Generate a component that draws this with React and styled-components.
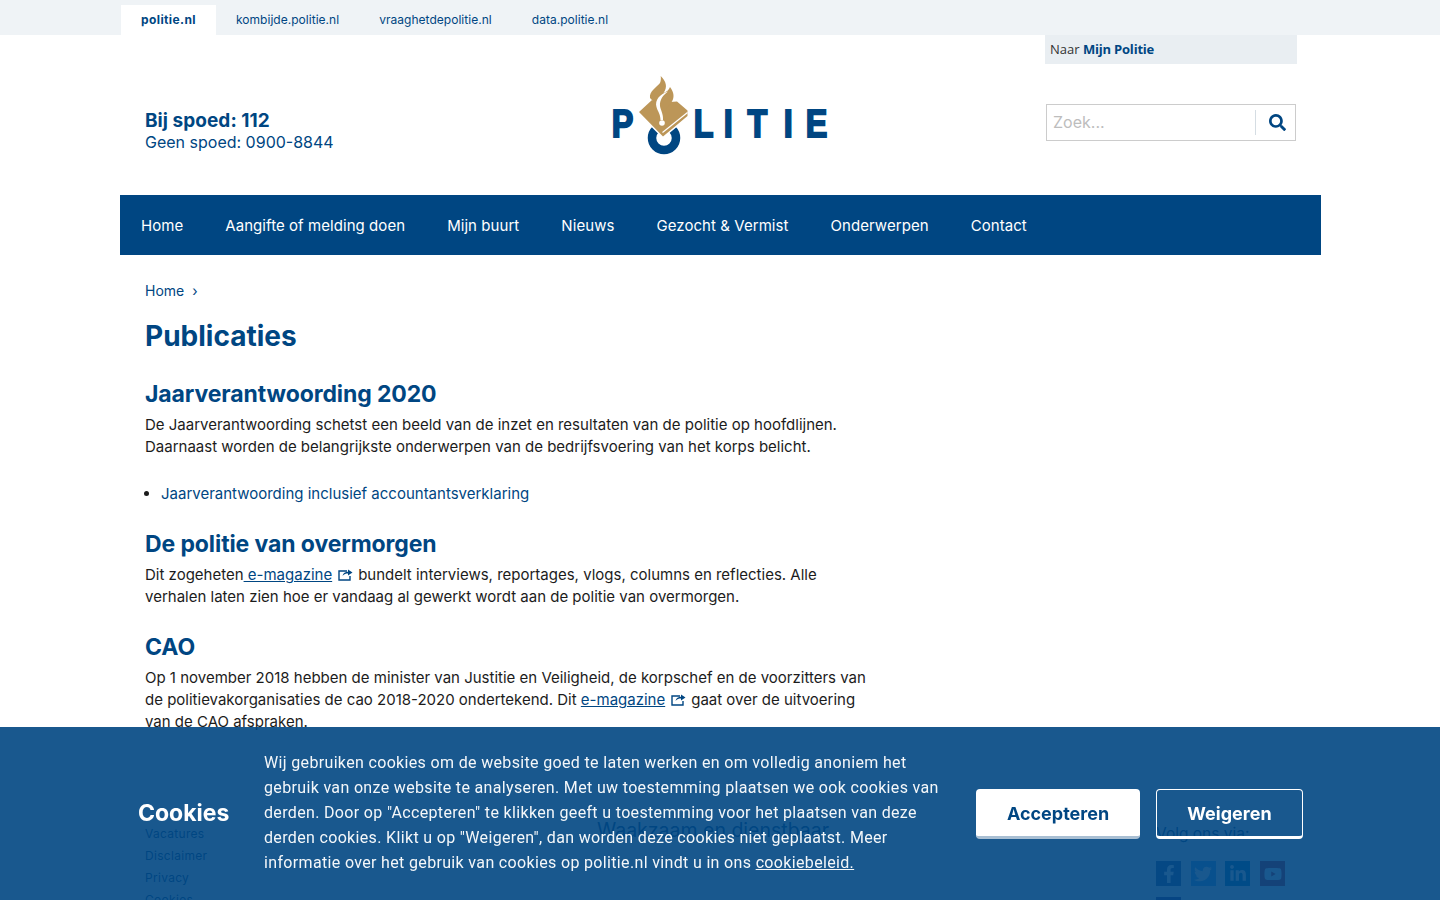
import React from 'react';
import styled, { createGlobalStyle } from 'styled-components';
import { FaSearch, FaFacebookF, FaTwitter, FaLinkedinIn, FaYoutube, FaRss } from 'react-icons/fa';

const blue = '#004682';
const gold = '#bc9658';

const GlobalStyle = createGlobalStyle`
  html, body {
    margin: 0;
    height: 100%;
    overflow: hidden;
    background: #fff;
  }
  body {
    font-family: Inter, "Noto Sans", sans-serif;
    color: #1c1c1c;
  }
  * { box-sizing: border-box; }
`;

const TopBar = styled.div`
  height: 35px;
  background: #eff3f6;
  padding: 5px 0 0 121px;
  display: flex;
`;

const Tab = styled.a`
  height: 30px;
  line-height: 29px;
  padding: 0 20px;
  font-size: 12px;
  letter-spacing: ${p => (p.$active ? '0.4px' : '0.03px')};
  color: ${blue};
  font-weight: ${p => (p.$active ? 700 : 400)};
  background: ${p => (p.$active ? '#fff' : 'transparent')};
`;

const Wrap = styled.div`
  width: 1201px;
  margin-left: 120px;
`;

const Header = styled.header`
  height: 160px;
  padding: 0 24px 0 25px;
  display: grid;
  grid-template-columns: 455px 240px 1fr;
`;

const Contact = styled.div`
  padding-top: 74px;
  color: ${blue};
`;

const Urgent = styled.div`
  font-size: 19px;
  font-weight: 700;
  line-height: 23px;
  letter-spacing: 0.05px;
`;

const NonUrgent = styled.div`
  font-size: 16px;
  line-height: 21px;
`;

const LogoBox = styled.a`
  padding-top: 25px;
  display: block;
`;

const HeaderRight = styled.div`
  display: flex;
  flex-direction: column;
  align-items: flex-end;
`;

const MyPolice = styled.div`
  width: 252px;
  height: 29px;
  line-height: 28px;
  padding-left: 5px;
  background: #e9eef2;
  font-family: "Open Sans", sans-serif;
  font-size: 13px;
  color: #333;

  b {
    color: ${blue};
    letter-spacing: -0.2px;
  }
`;

const SearchBox = styled.form`
  width: 250px;
  height: 37px;
  margin: 40px 1px 0 0;
  border: 1px solid #ccc;
  display: flex;
  align-items: center;
`;

const SearchInput = styled.input`
  flex: 1;
  min-width: 0;
  height: 100%;
  border: 0;
  outline: 0;
  padding: 0 6px 2px;
  font-family: Inter, sans-serif;
  font-size: 16px;
  background: transparent;

  &::placeholder {
    color: #bdbdbd;
  }
`;

const SearchButton = styled.span`
  width: 40px;
  height: 25px;
  padding-left: 3px;
  border-left: 1px solid #d5dde3;
  display: flex;
  align-items: center;
  justify-content: center;
  color: ${blue};
  font-size: 17px;
`;

const Nav = styled.nav`
  height: 60px;
  background: ${blue};
  display: flex;
  align-items: center;
`;

const NavItem = styled.a`
  padding: 0 21px;
  color: #fff;
  font-size: 15px;
  letter-spacing: 0.06px;
`;

const Main = styled.main`
  padding: 25px 0 0 25px;
  width: 750px;
`;

const Crumb = styled.div`
  font-size: 14px;
  line-height: 22px;
  color: ${blue};

  span {
    margin-left: 8px;
  }
`;

const Title = styled.h1`
  margin: 14px 0 23px;
  font-size: 28px;
  line-height: 40px;
  font-weight: 700;
  color: ${blue};
`;

const Section = styled.section`
  margin-bottom: 24px;
`;

const Heading = styled.h2`
  margin: 0 0 5px;
  font-size: 23px;
  line-height: 30px;
  font-weight: 700;
  letter-spacing: -0.1px;
  color: ${blue};
`;

const Para = styled.p`
  margin: 0;
  font-size: 15px;
  line-height: 22px;
`;

const LinkList = styled.ul`
  margin: 25px 0 0;
  padding: 0 0 0 16px;
  font-size: 15px;
  line-height: 22px;
`;

const PlainLink = styled.a`
  color: ${blue};
`;

const InlineLink = styled.a`
  color: ${blue};
  text-decoration: underline;
`;

const ExtIcon = styled.svg`
  width: 15px;
  height: 13px;
  margin: 0 5px 0 6px;
  vertical-align: -1px;
`;

const Footer = styled.footer`
  margin-top: 89px;
  padding-left: 25px;
  display: grid;
  grid-template-columns: 452px 559px 1fr;
  color: ${blue};
`;

const FooterLinks = styled.div`
  padding-top: 1px;
  font-size: 12px;
  line-height: 22px;
  letter-spacing: 0.3px;
`;

const Motto = styled.div`
  font-size: 19.5px;
  line-height: 16px;
`;

const FollowLabel = styled.div`
  padding-top: 1px;
  font-size: 15.5px;
  line-height: 22px;
`;

const Socials = styled.div`
  margin-top: 16px;
  display: grid;
  grid-template-columns: repeat(4, 25px);
  column-gap: 9.7px;
  row-gap: 11px;
`;

const SocialTile = styled.span`
  width: 25px;
  height: 25px;
  background: ${p => p.$bg};
  color: #fff;
  display: flex;
  align-items: center;
  justify-content: center;
  font-size: 18px;
`;

const CookieBar = styled.div`
  position: fixed;
  left: 0;
  right: 0;
  bottom: 0;
  height: 173px;
  padding-left: 138px;
  background: rgba(0, 70, 130, 0.9);
  color: #fff;
  display: flex;
  align-items: center;
`;

const CookieTitle = styled.div`
  width: 126px;
  padding-bottom: 2px;
  font-size: 23px;
  font-weight: 700;
`;

const CookieText = styled.p`
  width: 690px;
  margin: 0 22px 0 0;
  padding-bottom: 2px;
  font-family: Roboto, sans-serif;
  font-size: 16px;
  line-height: 25px;
  letter-spacing: 0.34px;
  opacity: 0.95;

  a {
    color: #fff;
    text-decoration: underline;
  }
`;

const CookieButton = styled.button`
  height: 50px;
  margin-left: ${p => p.$gap}px;
  width: ${p => p.$width}px;
  padding: 2px 0 0;
  border-radius: 4px;
  font-family: Inter, sans-serif;
  font-size: 18px;
  font-weight: 700;
  cursor: pointer;
  background: ${p => (p.$outline ? 'transparent' : '#fff')};
  color: ${p => (p.$outline ? '#fff' : blue)};
  border: ${p => (p.$outline ? '1px solid #fff' : '0')};
  border-bottom: 3px solid ${p => (p.$outline ? '#fff' : '#a9bfd3')};
`;

const logoLetters = [['P', 11.7], ['L', 93.7], ['I', 123.8], ['T', 147.4], ['I', 183.8], ['E', 205.7]];

const Logo = () => (
  <svg width="240" height="110" viewBox="0 0 240 110">
    <g fontFamily="'Liberation Sans', sans-serif" fontWeight="700" fontSize="38" fill={blue} stroke={blue} strokeWidth="2" strokeLinejoin="miter">
      {logoLetters.map(([letter, x]) => (
        <text key={x} transform={`translate(${x} 77) scale(0.85 1)`}>{letter}</text>
      ))}
    </g>
    <circle cx="64" cy="78" r="12" fill="none" stroke={blue} strokeWidth="8.500" />
    {/* book with a white edge that cuts through the O */}
    <path d="M39 52 L55 37 L77 41 L87.500 50.500 L87.500 56 L63 76.500 Z" fill="#fff" stroke="#fff" strokeWidth="3" />
    <path d="M39 52 L52 40 L62 45 L70 42 L77 41.500 L87.500 50.500 L87.500 56 L63 76.500 Z" fill={gold} />
    <path d="M62.500 72.500 L87.500 52.500" fill="none" stroke="#fff" strokeWidth="1.300" />
    {/* flame */}
    <path d="M60.700 16 C66 21 68 27 63.500 33 C66.500 32 69 30 70 27 C74 32 75 38 71 43 L66 49 L56 44 L50 38 C49 31 57 27 60 23 C61 21 61 18 60.700 16 Z" fill={gold} />
    <path d="M68 31.500 C60 34 54.500 40 56.500 47 C57.500 51 60.500 54 60.500 60 L63 60 C63.500 54 60.500 50 60 46 C59.500 40 63 35 68 31.500 Z" fill="#fff" />
    <circle cx="62" cy="63" r="2.800" fill="#fff" />
  </svg>
);

const External = () => (
  <ExtIcon viewBox="0 0 15 13">
    <path d="M9 3 H1 V12 H12 V8" fill="none" stroke={blue} strokeWidth="1.400" />
    <path d="M4.500 8 C5 5 7.500 3.800 10 3.800 V1.500 L14.500 4.500 L10 7.500 V5.500 C8 5.500 6 6 4.500 8 Z" fill={blue} />
  </ExtIcon>
);

export default function App() {
  return (
    <>
      <GlobalStyle />
      <TopBar>
        <Tab $active>politie.nl</Tab>
        <Tab>kombijde.politie.nl</Tab>
        <Tab>vraaghetdepolitie.nl</Tab>
        <Tab>data.politie.nl</Tab>
      </TopBar>
      <Wrap>
        <Header>
          <Contact>
            <Urgent>Bij spoed: 112</Urgent>
            <NonUrgent>Geen spoed: 0900-8844</NonUrgent>
          </Contact>
          <LogoBox><Logo /></LogoBox>
          <HeaderRight>
            <MyPolice>Naar <b>Mijn Politie</b></MyPolice>
            <SearchBox>
              <SearchInput placeholder="Zoek..." />
              <SearchButton><FaSearch /></SearchButton>
            </SearchBox>
          </HeaderRight>
        </Header>
        <Nav>
          {['Home', 'Aangifte of melding doen', 'Mijn buurt', 'Nieuws', 'Gezocht & Vermist', 'Onderwerpen', 'Contact'].map(item => (
            <NavItem key={item}>{item}</NavItem>
          ))}
        </Nav>
        <Main>
          <Crumb>Home<span>›</span></Crumb>
          <Title>Publicaties</Title>
          <Section>
            <Heading>Jaarverantwoording 2020</Heading>
            <Para>
              De Jaarverantwoording schetst een beeld van de inzet en resultaten van de politie op hoofdlijnen.
              Daarnaast worden de belangrijkste onderwerpen van de bedrijfsvoering van het korps belicht.
            </Para>
            <LinkList>
              <li><PlainLink>Jaarverantwoording inclusief accountantsverklaring</PlainLink></li>
            </LinkList>
          </Section>
          <Section>
            <Heading>De politie van overmorgen</Heading>
            <Para>
              Dit zogeheten<InlineLink> e-magazine</InlineLink><External />bundelt interviews, reportages, vlogs, columns en reflecties. Alle
              verhalen laten zien hoe er vandaag al gewerkt wordt aan de politie van overmorgen.
            </Para>
          </Section>
          <Section>
            <Heading>CAO</Heading>
            <Para>
              Op 1 november 2018 hebben de minister van Justitie en Veiligheid, de korpschef en de voorzitters van
              de politievakorganisaties de cao 2018-2020 ondertekend. Dit <InlineLink>e-magazine</InlineLink><External />gaat over de uitvoering
              van de CAO afspraken.
            </Para>
          </Section>
        </Main>
        <Footer>
          <FooterLinks>
            <div>Vacatures</div>
            <div>Disclaimer</div>
            <div>Privacy</div>
            <div>Cookies</div>
          </FooterLinks>
          <Motto>Waakzaam en dienstbaar</Motto>
          <div>
            <FollowLabel>Volg ons via:</FollowLabel>
            <Socials>
              <SocialTile $bg="#3b5998"><FaFacebookF /></SocialTile>
              <SocialTile $bg="#55acee"><FaTwitter /></SocialTile>
              <SocialTile $bg="#0077b5"><FaLinkedinIn /></SocialTile>
              <SocialTile $bg="#cd201f"><FaYoutube /></SocialTile>
              <SocialTile $bg="#3f3f8f"><FaRss /></SocialTile>
            </Socials>
          </div>
        </Footer>
      </Wrap>
      <CookieBar>
        <CookieTitle>Cookies</CookieTitle>
        <CookieText>
          Wij gebruiken cookies om de website goed te laten werken en om volledig anoniem het
          gebruik van onze website te analyseren. Met uw toestemming plaatsen we ook cookies van
          derden. Door op "Accepteren" te klikken geeft u toestemming voor het plaatsen van deze
          derden cookies. Klikt u op "Weigeren", dan worden deze cookies niet geplaatst. Meer
          informatie over het gebruik van cookies op politie.nl vindt u in ons <a>cookiebeleid.</a>
        </CookieText>
        <CookieButton $width={164} $gap={0}>Accepteren</CookieButton>
        <CookieButton $width={147} $gap={16} $outline>Weigeren</CookieButton>
      </CookieBar>
    </>
  );
}
